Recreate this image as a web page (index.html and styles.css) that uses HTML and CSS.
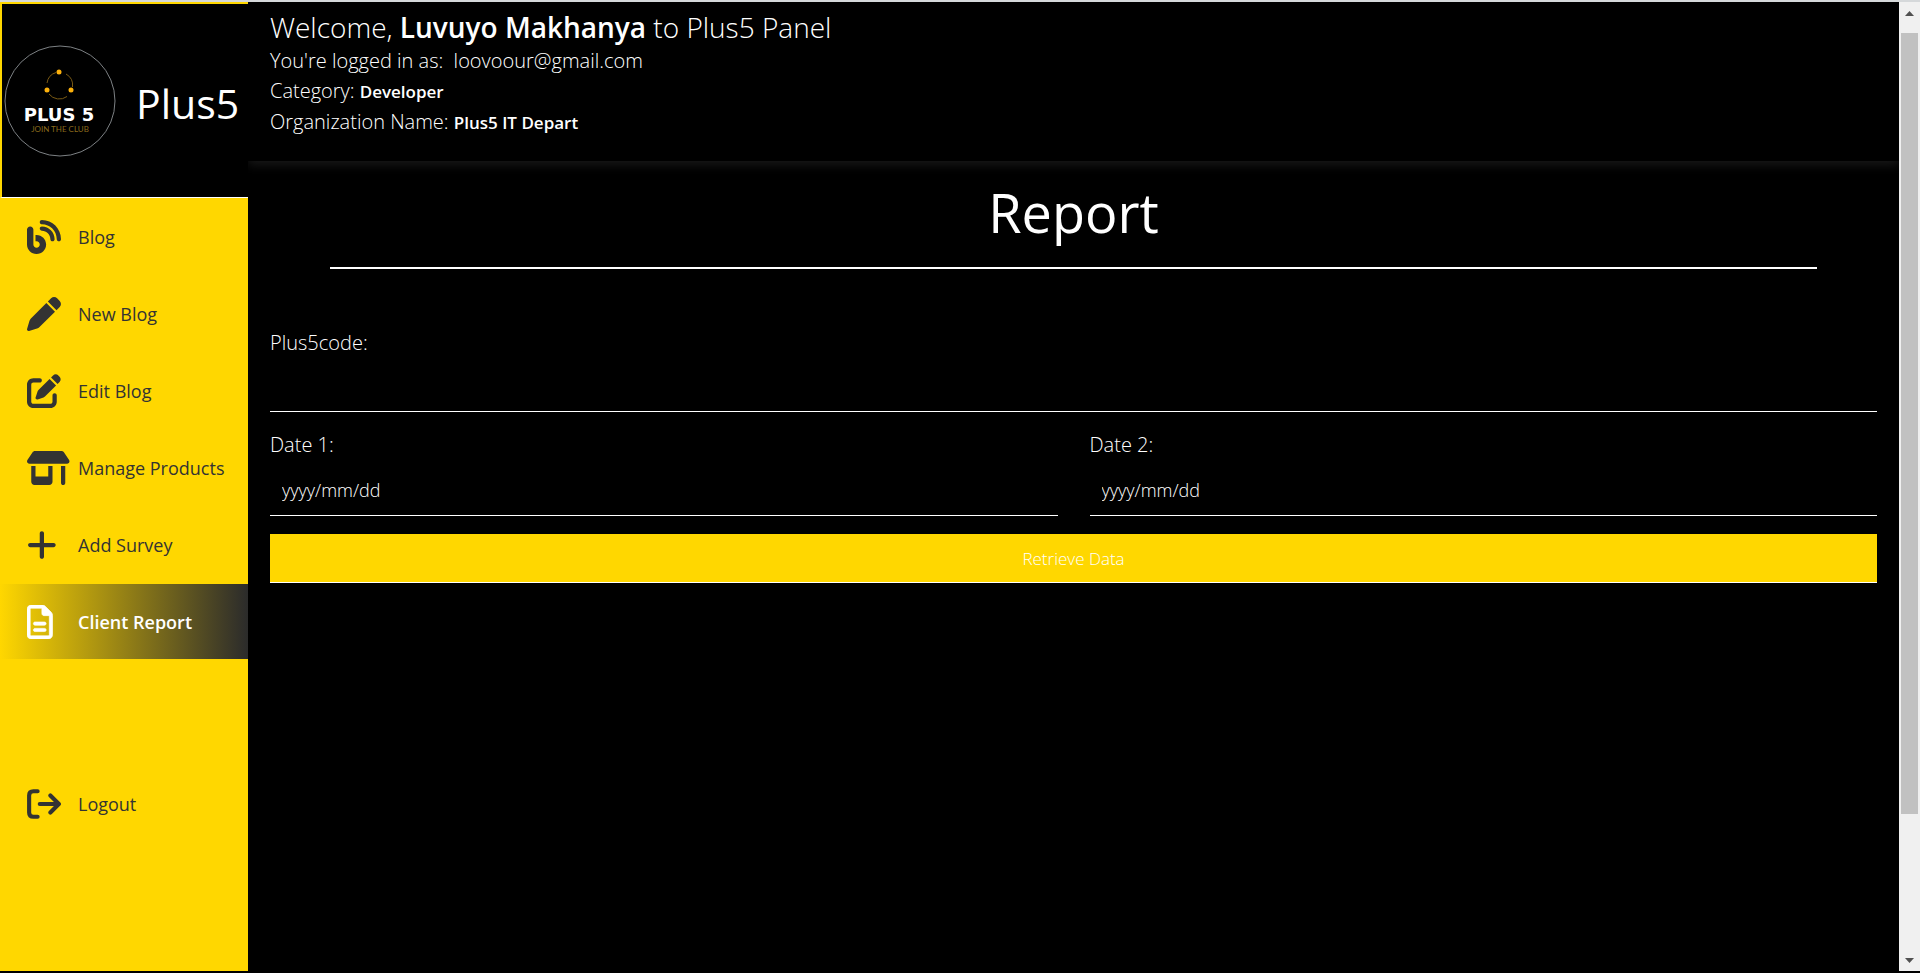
FILE: index.html
```html
<!DOCTYPE html>
<html lang="en">
<head>
<meta charset="utf-8">
<title>Plus5 Panel</title>
<link rel="stylesheet" href="styles.css">
</head>
<body>
<div class="app">
  <aside class="sidebar">
    <div class="brand">
      <svg class="brand-logo" viewBox="0 0 112 112" role="img" aria-label="Plus 5, join the club">
        <circle cx="56" cy="56" r="55" fill="none" stroke="#7d8184"/>
        <path d="M43 38A13 13 0 0 1 52 27.500M62 29A13 13 0 0 1 68.500 42M63 51.500A13 13 0 0 1 45 49" fill="none" stroke="#7a5a14"/>
        <circle cx="55" cy="27" r="2.500" fill="#fdb10b"/>
        <circle cx="43" cy="45" r="2.500" fill="#fdb10b"/>
        <circle cx="67" cy="45" r="2.500" fill="#fdb10b"/>
        <text class="logo-name" x="55" y="76" text-anchor="middle">PLUS 5</text>
        <text class="logo-tag" x="56" y="87" text-anchor="middle">JOIN THE CLUB</text>
      </svg>
      <span class="brand-name">Plus5</span>
    </div>
    <nav class="nav">
      <a class="nav-item" href="#"><span class="nav-icon"><svg class="icon" viewBox="0 0 512 512"><path d="M192 32c0 17.700 14.300 32 32 32c123.700 0 224 100.300 224 224c0 17.700 14.300 32 32 32s32-14.300 32-32C512 128.900 383.100 0 224 0c-17.700 0-32 14.300-32 32zm0 96c0 17.700 14.300 32 32 32c70.700 0 128 57.300 128 128c0 17.700 14.300 32 32 32s32-14.300 32-32c0-106-86-192-192-192c-17.700 0-32 14.300-32 32zM96 144c0-26.500-21.500-48-48-48S0 117.500 0 144V368c0 79.500 64.500 144 144 144s144-64.500 144-144s-64.500-144-144-144H128v96h16c26.500 0 48 21.500 48 48s-21.500 48-48 48s-48-21.500-48-48V144z"/></svg></span>Blog</a>
      <a class="nav-item" href="#"><span class="nav-icon"><svg class="icon" viewBox="0 0 512 512"><path d="M362.700 19.300L314.300 67.700 444.300 197.700l48.400-48.400c25-25 25-65.500 0-90.500L453.300 19.300c-25-25-65.500-25-90.500 0zm-71 71L58.600 323.500c-10.400 10.400-18 23.300-22.200 37.400L1 481.200C-1.500 489.700 .8 498.800 7 505s15.300 8.500 23.700 6.100l120.300-35.400c14.100-4.200 27-11.800 37.400-22.200L421.700 220.300 291.700 90.300z"/></svg></span>New Blog</a>
      <a class="nav-item" href="#"><span class="nav-icon"><svg class="icon" viewBox="0 0 512 512"><path d="M471.600 21.700c-21.900-21.900-57.300-21.900-79.200 0L362.300 51.700l97.900 97.900 30.100-30.100c21.900-21.900 21.900-57.300 0-79.200L471.600 21.700zm-299.200 220c-6.100 6.100-10.800 13.600-13.500 21.900l-29.600 88.800c-2.900 8.600-.6 18.100 5.800 24.600s15.900 8.700 24.600 5.800l88.800-29.600c8.200-2.700 15.700-7.400 21.900-13.500L437.700 172.300 339.700 74.300 172.400 241.700zM96 64C43 64 0 107 0 160V416c0 53 43 96 96 96H352c53 0 96-43 96-96V320c0-17.700-14.300-32-32-32s-32 14.300-32 32v96c0 17.700-14.300 32-32 32H96c-17.700 0-32-14.300-32-32V160c0-17.700 14.300-32 32-32h96c17.700 0 32-14.300 32-32s-14.300-32-32-32H96z"/></svg></span>Edit Blog</a>
      <a class="nav-item" href="#"><span class="nav-icon"><svg class="icon" viewBox="0 0 640 512"><path d="M36.800 192H603.200c20.300 0 36.800-16.500 36.800-36.800c0-7.300-2.200-14.400-6.200-20.400L558.200 21.400C549.300 8 534.400 0 518.300 0H121.700c-16 0-31 8-39.900 21.400L6.200 134.700c-4 6.100-6.200 13.200-6.200 20.400C0 175.500 16.500 192 36.800 192zM64 224V464c0 26.500 21.500 48 48 48H336c26.500 0 48-21.500 48-48V224H320V384H128V224H64zm448 0V480c0 17.700 14.300 32 32 32s32-14.300 32-32V224H512z"/></svg></span>Manage Products</a>
      <a class="nav-item" href="#"><span class="nav-icon"><svg class="icon" viewBox="0 0 448 512"><path d="M256 80c0-17.700-14.300-32-32-32s-32 14.300-32 32V224H48c-17.700 0-32 14.300-32 32s14.300 32 32 32H192V432c0 17.700 14.300 32 32 32s32-14.300 32-32V288H400c17.700 0 32-14.300 32-32s-14.300-32-32-32H256V80z"/></svg></span>Add Survey</a>
      <a class="nav-item active" href="#" aria-current="page"><span class="nav-icon"><svg class="icon" viewBox="0 0 384 512"><path d="M64 464c-8.800 0-16-7.200-16-16V64c0-8.800 7.200-16 16-16H224v80c0 17.700 14.300 32 32 32h80V448c0 8.800-7.200 16-16 16H64zM64 0C28.700 0 0 28.700 0 64V448c0 35.300 28.700 64 64 64H320c35.300 0 64-28.700 64-64V154.500c0-17-6.700-33.300-18.700-45.300L274.700 18.700C262.700 6.700 246.500 0 229.500 0H64zm56 256c-13.300 0-24 10.700-24 24s10.700 24 24 24H264c13.300 0 24-10.700 24-24s-10.700-24-24-24H120zm0 96c-13.300 0-24 10.700-24 24s10.700 24 24 24H264c13.300 0 24-10.700 24-24s-10.700-24-24-24H120z" stroke="currentColor" stroke-width="10"/></svg></span>Client Report</a>
      <a class="nav-item logout" href="#"><span class="nav-icon"><svg class="icon" viewBox="0 0 512 512"><path d="M160 64H96Q32 64 32 128V384Q32 448 96 448H160M192 256H470M352 128L480 256L352 384" fill="none" stroke="currentColor" stroke-width="62" stroke-linecap="round" stroke-linejoin="round"/></svg></span>Logout</a>
    </nav>
  </aside>
  <div class="page">
    <header class="header">
      <p class="welcome">Welcome, <strong>Luvuyo Makhanya</strong> to Plus5 Panel</p>
      <p class="detail">You're logged in as: &nbsp;loovoour@gmail.com</p>
      <p class="detail">Category: <strong>Developer</strong></p>
      <p class="detail">Organization Name: <strong>Plus5 IT Depart</strong></p>
    </header>
    <main class="content">
      <h1 class="title">Report</h1>
      <form class="form">
        <div class="field wide">
          <label for="code">Plus5code:</label>
          <input id="code" type="text">
        </div>
        <div class="field">
          <label for="date1">Date 1:</label>
          <input id="date1" type="text" placeholder="yyyy/mm/dd">
        </div>
        <div class="field">
          <label for="date2">Date 2:</label>
          <input id="date2" type="text" placeholder="yyyy/mm/dd">
        </div>
        <button class="submit wide" type="button">Retrieve Data</button>
      </form>
    </main>
  </div>
  <div class="scrollbar" aria-hidden="true">
    <svg class="arrow" viewBox="0 0 9 5"><path d="M0 5L4.500 0L9 5z"/></svg>
    <div class="track"><div class="thumb"></div></div>
    <svg class="arrow" viewBox="0 0 9 5"><path d="M0 0L4.500 5L9 0z"/></svg>
  </div>
</div>
</body>
</html>
```
FILE: styles.css
```css
* { box-sizing: border-box; }

body {
  margin: 0;
  background: #000;
  color: #fff;
  font-family: "Open Sans", "Noto Sans", sans-serif;
  font-size: 18px;
  font-weight: 300;
}

.app {
  display: flex;
  min-height: 100vh;
  border-top: 2px solid #d5d8da;
  border-bottom: 2px solid #000;
}

.sidebar {
  flex: 0 0 248px;
  background: #ffd700;
}

.brand {
  display: flex;
  align-items: center;
  gap: 20px;
  height: 196px;
  border: 0 solid #ffd700;
  border-width: 2px 0 0 2px;
  border-bottom: 1px solid #fff;
  padding-left: 2px;
  background: #000;
}
.brand-logo { width: 112px; height: 112px; flex: none; }
.logo-name { font: 700 18px "DejaVu Sans", sans-serif; fill: #fff; }
.logo-tag { font: 400 8px Lato, sans-serif; fill: #8a6a1c; }
.brand-name { padding-top: 4px; font-size: 41px; font-weight: 400; line-height: 56px; }

.nav {
  display: flex;
  flex-direction: column;
  gap: 2px;
  padding-top: 1px;
}
.nav-item {
  display: flex;
  align-items: center;
  height: 75px;
  padding-left: 27px;
  color: #333;
  font-weight: 400;
  text-decoration: none;
  white-space: nowrap;
}
.nav-item.active {
  background: linear-gradient(to right, #ffd700, #2b2b2b);
  color: #fff;
  font-weight: 600;
}
.nav-item.logout { margin-top: 105px; }
.nav-icon { flex: 0 0 51px; display: flex; }
.icon { height: 34px; fill: currentColor; }

.page { flex: 1; min-width: 0; overflow: hidden; }

.header {
  height: 159px;
  padding: 7px 22px;
  box-shadow: 0 4px 10px #181818;
}
.header p { margin: 0; }
.welcome { font-size: 28px; line-height: 37px; }
.welcome strong { font-weight: 600; }
.detail { font-size: 20px; line-height: 30px; }
.detail strong { font-size: 17px; font-weight: 600; }

.content { padding: 14px 22px; }
.title {
  margin: 0 60px;
  padding-bottom: 18px;
  border-bottom: 2px solid #fff;
  font-size: 54px;
  font-weight: 400;
  line-height: 74px;
  text-align: center;
}

.form {
  display: grid;
  grid-template-columns: 1fr 1fr;
  column-gap: 32px;
  row-gap: 18px;
  margin-top: 59px;
}
.wide { grid-column: 1 / -1; }
.field { display: flex; flex-direction: column; }
.field label { font-size: 20px; line-height: 30px; }
.field input {
  height: 56px;
  border: 0;
  border-bottom: 1px solid #fff;
  padding: 4px 12px 0;
  background: transparent;
  color: #fff;
  font: inherit;
}
.field.wide input { height: 54px; }
.field input::placeholder { color: #fff; opacity: 1; }
.submit {
  height: 49px;
  border: 0;
  border-bottom: 1px solid #fff;
  background: #ffd700;
  color: #fff;
  font: inherit;
  font-size: 17px;
}

.scrollbar {
  flex: 0 0 21px;
  display: flex;
  flex-direction: column;
  align-items: center;
  padding: 9px 0 8px;
  background: #f0f0f0;
}
.arrow { width: 9px; height: 5px; fill: #505050; }
.track { flex: 1; width: 17px; padding: 17px 0; }
.thumb { height: 86%; background: #c1c1c1; }
```
